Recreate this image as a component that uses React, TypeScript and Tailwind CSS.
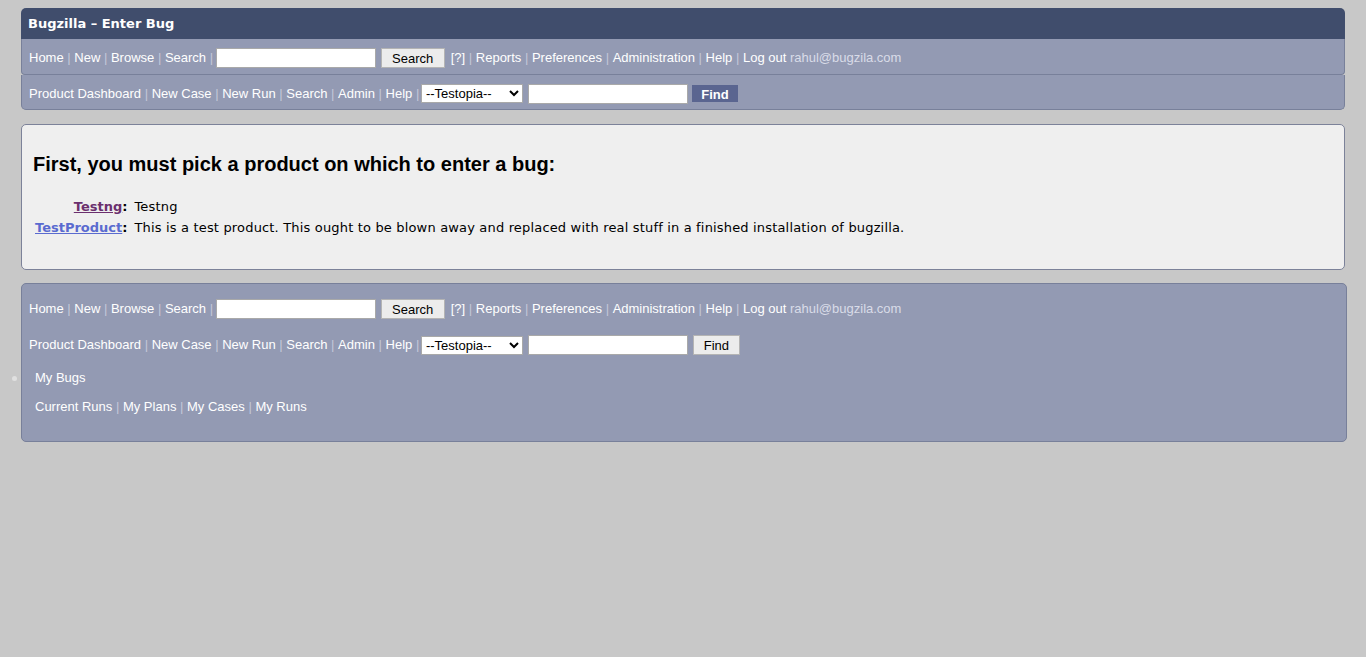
import React from 'react';

const sans = { fontFamily: '"Liberation Sans", Arial, sans-serif' };
const verdana = { fontFamily: '"DejaVu Sans", Verdana, sans-serif' };

const Sep = () => <span className="text-[#c3c8da]">&nbsp;|&nbsp;</span>;

const LinkList = ({ items }: { items: string[] }) => (
    <>
        {items.map((item, i) => (
            <React.Fragment key={item}>
                {i > 0 && <Sep />}
                <span className="text-white">{item}</span>
            </React.Fragment>
        ))}
    </>
);

const MainNav = () => (
    <div className="flex items-center text-[13px] whitespace-nowrap" style={sans}>
        <LinkList items={['Home', 'New', 'Browse', 'Search']} />
        <Sep />
        <input className="h-[20px] w-[160px] border border-[#a9a9a9] bg-white ml-[-1px]" />
        <button className="ml-[5px] h-[20px] w-[64px] border border-[#b4b4b4] bg-[#ececec] text-[13px] text-black">
            Search
        </button>
        <span className="ml-[6px] text-white">[?]</span>
        <Sep />
        <LinkList items={['Reports', 'Preferences', 'Administration', 'Help', 'Log out']} />
        <span className="text-[#d9dce8]">&nbsp;rahul@bugzila.com</span>
    </div>
);

const TestopiaNav = ({ darkFind }: { darkFind: boolean }) => (
    <div className="flex items-center text-[13px] whitespace-nowrap" style={sans}>
        <LinkList items={['Product Dashboard', 'New Case', 'New Run', 'Search', 'Admin', 'Help']} />
        <Sep />
        <select className="ml-[-2px] h-[19px] w-[102px] border border-[#a9a9a9] bg-white text-[13px] text-black">
            <option>--Testopia--</option>
        </select>
        <input className="ml-[5px] h-[20px] w-[160px] border border-[#a9a9a9] bg-white" />
        {darkFind ? (
            <button className="ml-[4px] h-[17px] w-[46px] bg-[#5a6590] text-[13px] font-bold text-white">
                Find
            </button>
        ) : (
            <button className="ml-[5px] h-[20px] w-[47px] border border-[#b4b4b4] bg-[#ececec] text-[13px] text-black">
                Find
            </button>
        )}
    </div>
);

const products = [
    { name: 'Testng', desc: 'Testng', color: 'text-[#6b2f6e]' },
    {
        name: 'TestProduct',
        desc: 'This is a test product. This ought to be blown away and replaced with real stuff in a finished installation of bugzilla.',
        color: 'text-[#5a6bd0]',
    },
];

export default function App() {
    return (
        <div className="min-h-[657px] bg-[#c8c8c8] pt-[8px] pl-[21px] pr-[21px]">
            <div>
                <div className="rounded-t-[5px] bg-[#404d6c] px-[7px] h-[31px] flex items-center">
                    <span className="text-[13px] font-bold text-white" style={verdana}>
                        Bugzilla – Enter Bug
                    </span>
                </div>
                <div className="h-[36px] bg-[#939ab3] px-[7px] pt-[2px] flex items-center border-x border-b border-[#78809a] rounded-b-[4px]">
                    <MainNav />
                </div>
                <div className="h-[35px] bg-[#939ab3] px-[7px] pt-[3px] flex items-center border border-t-0 border-[#78809a] rounded-b-[5px]">
                    <TestopiaNav darkFind />
                </div>
            </div>

            <div className="mt-[14px] h-[146px] rounded-[5px] border border-[#7c8299] bg-[#efefef] px-[11px] pt-[27px]">
                <h2 className="text-[20px] font-bold text-black leading-[24px]" style={sans}>
                    First, you must pick a product on which to enter a bug:
                </h2>
                <table className="mt-[20px] text-[13px] text-black" style={verdana}>
                    <tbody>
                        {products.map((p) => (
                            <tr key={p.name}>
                                <th className="text-right font-bold pr-[7px] pl-[2px] h-[21px] align-middle whitespace-nowrap">
                                    <span className={`underline ${p.color}`}>{p.name}</span>:
                                </th>
                                <td className="align-middle pt-[1px] tracking-[0.17px]">{p.desc}</td>
                            </tr>
                        ))}
                    </tbody>
                </table>
            </div>

            <div className="relative mt-[13px] mr-[-2px] h-[159px] rounded-[5px] border border-[#78809a] bg-[#939ab3] px-[7px] pt-[15px]">
                <MainNav />
                <div className="mt-[16px]">
                    <TestopiaNav darkFind={false} />
                </div>
                <ul className="mt-[15px] pl-[6px] text-[13px] leading-[16px]" style={sans}>
                    <li className="relative text-white">
                        <span className="absolute left-[-23px] top-[6px] h-[5px] w-[5px] rounded-full bg-[#e0e0e0]" />
                        My Bugs
                        <div className="mt-[13px] whitespace-nowrap">
                            <LinkList items={['Current Runs', 'My Plans', 'My Cases', 'My Runs']} />
                        </div>
                    </li>
                </ul>
            </div>
        </div>
    );
}
